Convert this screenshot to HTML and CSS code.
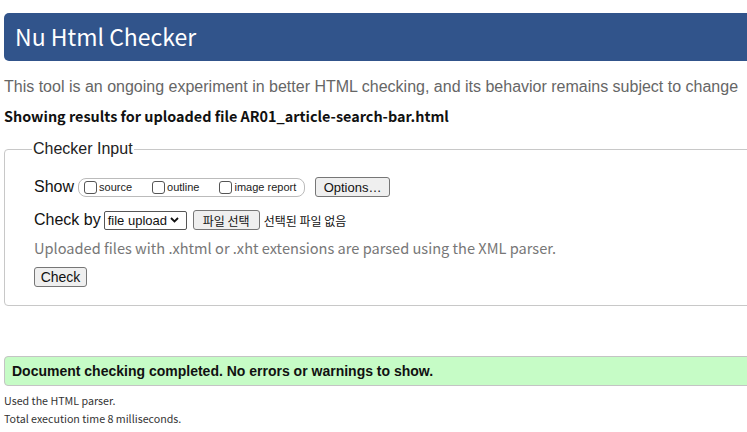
FILE: index.html
```html
<!DOCTYPE html>
<html>
<head>
<meta charset="utf-8">
<link rel="stylesheet" href="styles.css">
</head>
<body>
<div class="page">
  <h1 class="title">Nu Html Checker</h1>
  <p class="intro">This tool is an ongoing experiment in better HTML checking, and its behavior remains subject to change</p>
  <p class="showing">Showing results for uploaded file AR01_article-search-bar.html</p>
  <fieldset class="input">
    <legend class="legend">Checker Input</legend>
    <div class="row row-show">
      <span class="label">Show</span>
      <span class="opts">
        <label class="opt"><span class="cb"></span>source</label>
        <label class="opt"><span class="cb"></span>outline</label>
        <label class="opt"><span class="cb"></span>image report</label>
      </span>
      <span class="btn btn-options">Options…</span>
    </div>
    <div class="row row-by">
      <span class="label">Check by</span>
      <span class="select">file upload<svg class="chev" width="9" height="6" viewBox="0 0 9 6"><path d="M1 1 L4.5 4.5 L8 1" fill="none" stroke="#111" stroke-width="1.8"/></svg></span>
      <span class="btn btn-file">파일 선택</span>
      <span class="nofile">선택된 파일 없음</span>
    </div>
    <p class="hint">Uploaded files with .xhtml or .xht extensions are parsed using the XML parser.</p>
    <div class="row"><span class="btn btn-check">Check</span></div>
  </fieldset>
  <p class="success">Document checking completed. No errors or warnings to show.</p>
  <p class="meta meta-first">Used the HTML parser.</p>
  <p class="meta">Total execution time 8 milliseconds.</p>
</div>
</body>
</html>
```
FILE: styles.css
```css
html, body { margin: 0; padding: 0; background: #fff; overflow: hidden; }
.page {
  width: 800px;
  padding: 13px 0 0 4px;
  display: flex;
  flex-direction: column;
  font-family: "Liberation Sans", Arial, sans-serif;
  color: #222;
}
.title {
  margin: 0;
  height: 48px;
  line-height: 47px;
  background: #31548b;
  color: #fff;
  border-radius: 5px;
  padding-left: 11px;
  font-family: "Noto Sans CJK KR", "Noto Sans", sans-serif;
  font-weight: 400;
  font-size: 23px;
}
.intro {
  margin: 17px 0 0;
  font-size: 16px;
  line-height: 18px;
  color: #666;
}
.showing {
  margin: 10px 0 0;
  font-family: "Noto Sans CJK KR", "Noto Sans", sans-serif;
  font-weight: 700;
  font-size: 14.4px;
  line-height: 20px;
  color: #111;
}
.input {
  margin: 14px 0 0;
  border: 1px solid #c8c8c8;
  border-radius: 4px;
  padding: 19px 0 18px 29px;
  min-width: 0;
}
.legend {
  margin-left: -2px;
  padding: 0 1px;
  font-size: 16px;
  line-height: 18px;
  color: #222;
}
.row {
  display: flex;
  align-items: center;
}
.label { font-size: 16px; color: #111; }
.row-show { height: 20px; }
.opts {
  margin-left: 4px;
  height: 19px;
  width: 227px;
  border: 1px solid #bbb;
  border-radius: 8px;
  display: flex;
  align-items: center;
  padding-left: 5px;
  box-sizing: border-box;
}
.opt {
  display: flex;
  align-items: center;
  font-size: 11px;
  color: #222;
  margin-right: 20px;
}
.opt:last-child { margin-right: 0; }
.cb {
  width: 13px;
  height: 13px;
  border: 1px solid #555;
  border-radius: 3px;
  margin-right: 2px;
  box-sizing: border-box;
}
.btn {
  display: inline-flex;
  align-items: center;
  justify-content: center;
  border: 1px solid #767676;
  border-radius: 3px;
  background: #efefef;
  color: #111;
  box-sizing: border-box;
  height: 20px;
}
.btn-options { margin-left: 10px; width: 75px; font-size: 13px; }
.row-by { margin-top: 13px; height: 20px; }
.select {
  margin-left: 3px;
  width: 83px;
  height: 19px;
  border: 1px solid #555;
  border-radius: 2px;
  box-sizing: border-box;
  font-size: 13px;
  display: flex;
  align-items: center;
  padding-left: 3px;
  color: #111;
}
.chev { margin-left: 3px; }
.btn-file {
  margin-left: 6px;
  width: 67px;
  font-family: "Noto Sans CJK KR", sans-serif;
  font-size: 12px;
}
.nofile {
  margin-left: 4px;
  font-family: "Noto Sans CJK KR", sans-serif;
  font-size: 12px;
  color: #111;
}
.hint {
  margin: 8px 0 9px;
  font-family: "Noto Sans CJK KR", "Noto Sans", sans-serif;
  font-size: 14.6px;
  line-height: 20px;
  color: #777;
}
.btn-check { width: 53px; font-size: 14px; }
.success {
  margin: 50px 0 0;
  height: 30px;
  box-sizing: border-box;
  background: #c6fcc6;
  border: 1px solid #c4c4c4;
  border-radius: 4px;
  padding-left: 7px;
  display: flex;
  align-items: center;
  font-weight: 700;
  font-size: 14px;
  color: #111;
}
.meta {
  margin: 5px 0 0;
  font-family: "Noto Sans CJK KR", "Noto Sans", sans-serif;
  font-size: 10.7px;
  line-height: 13px;
  color: #333;
}
.meta-first { margin-top: 8px; }
```
